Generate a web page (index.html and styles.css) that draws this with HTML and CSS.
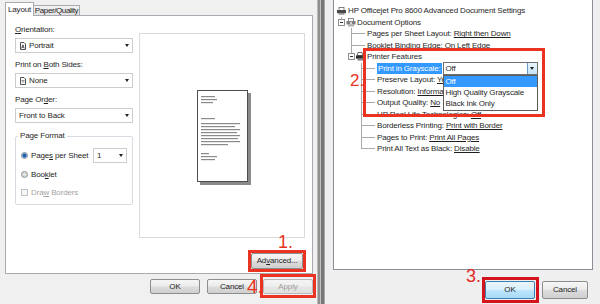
FILE: index.html
```html
<!DOCTYPE html>
<html>
<head>
<meta charset="utf-8">
<link rel="stylesheet" href="styles.css">
</head>
<body>
<div class="screen">
  <section class="dlg-left">
    <div class="tabs">
      <div class="tab active">Layout</div>
      <div class="tab paper">Paper/Quality</div>
    </div>
    <div class="panel">
      <div class="opts">
        <div class="lbl"><u>O</u>rientation:</div>
        <div class="combo">
          <svg class="cico" width="6" height="8" viewBox="0 0 6 8"><path d="M0.5 0.5h3.5l1.5 1.5v5.5h-5z" fill="#fff" stroke="#555" stroke-width="1"/><path d="M1.6 6.4l1.3-3.6 1.3 3.6M2.1 5.2h1.6" fill="none" stroke="#333" stroke-width="0.8"/></svg>
          <span>Portrait</span><span class="arr"></span>
        </div>
        <div class="lbl gap">Print on <u>B</u>oth Sides:</div>
        <div class="combo">
          <svg class="cico" width="6" height="8" viewBox="0 0 6 8"><path d="M0.5 0.5h3.5l1.5 1.5v5.5h-5z" fill="#fff" stroke="#555" stroke-width="1"/><path d="M1.5 3.5h3M1.5 5h3" stroke="#777" stroke-width="0.8"/></svg>
          <span>None</span><span class="arr"></span>
        </div>
        <div class="lbl gap">Page Or<u>d</u>er:</div>
        <div class="combo plain"><span>Front to Back</span><span class="arr"></span></div>
        <fieldset class="group">
          <legend>Page Format</legend>
          <div class="frow first"><span class="radio on"></span><span>Page<u>s</u> per Sheet</span><div class="combo small"><span>1</span><span class="arr"></span></div></div>
          <div class="frow"><span class="radio"></span><span>Boo<u>k</u>let</span></div>
          <div class="frow off"><span class="check"></span><span>Dra<u>w</u> Borders</span></div>
        </fieldset>
      </div>
      <div class="pcol">
        <div class="preview">
          <div class="page">
            <svg width="49" height="90" viewBox="0 0 49 90">
              <g fill="#8a8a8a">
                <rect x="3" y="5" width="14" height="1.2"/>
                <rect x="3" y="8" width="16" height="1.2"/>
                <rect x="3" y="11" width="12" height="1.2"/>
                <rect x="3" y="27" width="14" height="1.2"/>
                <rect x="3" y="32" width="39" height="1.2"/>
                <rect x="3" y="35" width="34" height="1.2"/>
                <rect x="3" y="38" width="39" height="1.2"/>
                <rect x="3" y="41" width="36" height="1.2"/>
                <rect x="3" y="44" width="39" height="1.2"/>
                <rect x="3" y="47" width="37" height="1.2"/>
                <rect x="3" y="50" width="39" height="1.2"/>
                <rect x="3" y="53" width="27" height="1.2"/>
                <rect x="3" y="62" width="8" height="1.2"/>
                <rect x="3" y="65" width="16" height="1.2"/>
                <rect x="3" y="68" width="14" height="1.2"/>
              </g>
            </svg>
          </div>
        </div>
        <div class="adv-row">
          <div class="mark adv">
            <button class="btn wide">Ad<u>v</u>anced...</button>
            <span class="num n1">1.</span>
          </div>
        </div>
      </div>
    </div>
    <div class="btnrow-left">
      <button class="btn">OK</button>
      <button class="btn cancel">Cancel</button>
      <div class="mark apply">
        <button class="btn dis">Apply</button>
        <span class="num n4">4.</span>
      </div>
    </div>
  </section>
  <div class="divider"></div>
  <section class="dlg-right">
    <div class="tree">
      <div class="row l0"><span class="ico"><svg width="9" height="8" viewBox="0 0 9 8"><rect x="2" y="0.5" width="5" height="3" fill="#fff" stroke="#666" stroke-width="0.8"/><rect x="0" y="3" width="9" height="3.2" fill="#4a4a4a"/><rect x="1.5" y="6" width="6" height="1.8" fill="#9a9a9a"/></svg></span><span class="t">HP Officejet Pro 8600 Advanced Document Settings</span></div>
      <div class="row l1"><span class="exp up"><i class="box"></i></span><span class="ico"><svg width="10" height="9" viewBox="0 0 10 9"><rect x="2.5" y="0.5" width="5" height="3" fill="#fff" stroke="#777" stroke-width="0.8"/><rect x="0.5" y="3" width="9" height="3.5" fill="#7d7d7d"/><circle cx="5" cy="5" r="1.2" fill="#d8d8d8"/><rect x="2" y="6.5" width="6" height="2" fill="#b0b0b0"/></svg></span><span class="t">Document Options</span></div>
      <div class="row l2"><span class="exp tee"></span><span class="ico stub"></span><span class="t">Pages per Sheet Layout: <u>Right then Down</u></span></div>
      <div class="row l2"><span class="exp tee"></span><span class="ico stub"></span><span class="t">Booklet Binding Edge: <u>On Left Edge</u></span></div>
      <div class="row l2"><span class="exp up"><i class="box"></i></span><span class="ico"><svg width="9" height="9" viewBox="0 0 9 9"><path d="M2 0.5l4 0 1 3h-6z" fill="#fff" stroke="#444" stroke-width="0.8"/><rect x="0" y="3.5" width="9" height="3.2" fill="#2e2e2e"/><rect x="1.5" y="6.5" width="6" height="2" fill="#808080"/><rect x="6.5" y="4.3" width="1.2" height="1" fill="#6cc04a"/></svg></span><span class="t">Printer Features</span></div>
      <div class="row l3"><span class="exp tee"></span><span class="ico stub"></span><span class="t sel">Print in Grayscale:</span>
        <span class="dd"><span class="ddv">Off</span><span class="ddb"><span class="arr"></span></span>
          <span class="pop">
            <span class="opt hi">Off</span>
            <span class="opt">High Quality Grayscale</span>
            <span class="opt">Black Ink Only</span>
          </span>
        </span>
      </div>
      <div class="row l3"><span class="exp tee"></span><span class="ico stub"></span><span class="t">Preserve Layout: <u>Ye</u></span></div>
      <div class="row l3"><span class="exp tee"></span><span class="ico stub"></span><span class="t">Resolution: <u>Informa</u></span></div>
      <div class="row l3"><span class="exp tee"></span><span class="ico stub"></span><span class="t">Output Quality: <u>No</u></span></div>
      <div class="row l3"><span class="exp tee"></span><span class="ico stub"></span><span class="t">HP Real Life Technologies: <u>Off</u></span></div>
      <div class="row l3"><span class="exp tee"></span><span class="ico stub"></span><span class="t">Borderless Printing: <u>Print with Border</u></span></div>
      <div class="row l3"><span class="exp tee"></span><span class="ico stub"></span><span class="t">Pages to Print: <u>Print All Pages</u></span></div>
      <div class="row l3"><span class="exp end"></span><span class="ico stub"></span><span class="t">Print All Text as Black: <u>Disable</u></span></div>
      <div class="redbox"><span class="num n2">2.</span></div>
    </div>
    <div class="btnrow-right">
      <div class="mark ok">
        <button class="btn blue">OK</button>
        <span class="num n3">3.</span>
      </div>
      <button class="btn cancel2">Cancel</button>
    </div>
  </section>
</div>
</body>
</html>
```

FILE: styles.css
```css
* { box-sizing: border-box; margin: 0; padding: 0; }
html, body { width: 600px; height: 304px; overflow: hidden; }
body {
  font-family: "Liberation Sans", Arial, sans-serif;
  font-size: 8px;
  letter-spacing: -0.15px;
  color: #1f1f1f;
  background: #f0f0f0;
}
.screen { display: flex; width: 600px; height: 304px; }

/* ---------- left dialog ---------- */
.dlg-left {
  width: 317px;
  flex: none;
  display: flex;
  flex-direction: column;
  background: #f0f0f0;
}
.tabs { display: flex; align-items: flex-end; height: 15px; padding-left: 5px; }
.tab {
  height: 10px;
  border: 1px solid #a7aab0;
  border-bottom: 0;
  background: linear-gradient(#f3f3f3, #e2e2e2);
  line-height: 9px;
  text-align: center;
  white-space: nowrap;
}
.tab.active {
  width: 29px;
  height: 14px;
  margin-bottom: -1px;
  background: #fff;
  line-height: 13px;
  z-index: 1;
}
.tab.paper { width: 47px; margin-left: -1px; letter-spacing: -0.4px; }

.panel {
  margin-left: 5px;
  width: 308px;
  height: 259px;
  border: 1px solid #a7aab0;
  background: #fff;
  display: grid;
  grid-template-columns: 118px 166px;
  column-gap: 6px;
  align-items: start;
  padding: 8px 0 0 9px;
}
.opts { display: flex; flex-direction: column; }
.lbl { line-height: 12px; height: 12px; white-space: nowrap; }
.lbl.gap { margin-top: 6px; }
.combo {
  height: 15px;
  margin-top: 2px;
  border: 1px solid #cdcdcd;
  background: #fff;
  display: flex;
  align-items: center;
  padding: 0 3px 0 4px;
  white-space: nowrap;
}
.combo.plain { padding-left: 3px; }
.cico { margin-right: 3px; flex: none; }
.arr {
  margin-left: auto;
  width: 0; height: 0;
  border-left: 2.5px solid transparent;
  border-right: 2.5px solid transparent;
  border-top: 3px solid #222;
}
.group {
  margin-top: 7px;
  border: 1px solid #d5dbe1;
  border-radius: 2px;
  padding: 0 5px 3.5px 5px;
  min-width: 0;
}
.group legend {
  margin-left: -3px;
  padding: 0 2px;
  line-height: 12px;
  height: 12px;
}
.frow { height: 15px; display: flex; align-items: center; margin-top: 3.5px; white-space: nowrap; }
.frow.first { margin-top: 6px; }
.frow.off { color: #a3a3a3; }
.radio {
  width: 7px; height: 7px;
  border-radius: 50%;
  border: 1px solid #8c8f94;
  background: radial-gradient(circle, #e8e8e8, #d0d0d0);
  margin-right: 3px;
  flex: none;
}
.radio.on { background: radial-gradient(circle, #1b5fb3 0 1.6px, #8ab4e0 2.2px, #e6eef7 3px); }
.check {
  width: 7px; height: 7px;
  border: 1px solid #c3c3c3;
  background: #f5f5f5;
  margin-right: 3px;
  flex: none;
}
.combo.small { width: 34px; margin: 0 0 0 auto; padding-left: 3px; }

.pcol { display: flex; flex-direction: column; }
.preview {
  margin-top: 9px;
  height: 205px;
  border: 1px solid #dadada;
  display: flex;
  align-items: center;
  justify-content: center;
}
.page {
  width: 51px; height: 92px;
  border: 1px solid #4e4e4e;
  background: #fff;
  box-shadow: 3px 3px 0 #8a8a8a;
}
.page svg { display: block; }
.adv-row { margin-top: 12px; margin-right: -1px; display: flex; justify-content: flex-end; }

.mark { border: 3px solid #ea3323; position: relative; display: flex; }
.btn {
  font-family: inherit;
  font-size: 8px;
  letter-spacing: inherit;
  color: #1f1f1f;
  width: 50px;
  height: 15px;
  border: 1px solid #8d8d8d;
  border-radius: 2px;
  background: linear-gradient(#f6f6f6, #ebebeb 48%, #dddddd 52%, #cfcfcf);
  padding: 0;
  line-height: 13px;
  text-align: center;
}
.btn.wide { width: 52px; height: 16px; line-height: 14px; }
.btn.dis { color: #9c9c9c; border-color: #b8b8b8; background: linear-gradient(#f4f4f4, #eeeeee 48%, #e6e6e6 52%, #e0e0e0); }
.num {
  position: absolute;
  color: #ea3323;
  letter-spacing: 0;
  line-height: 1;
  white-space: nowrap;
  font-family: "Liberation Sans", Arial, sans-serif;
}
.n1 { font-size: 18px; left: 27px; top: -20px; }
.n4 { font-size: 19px; left: -16px; top: 0px; }
.n2 { font-size: 17px; left: -16px; top: 21px; }
.n3 { font-size: 18px; left: -19px; top: -13px; color: #e52a26; }

.btnrow-left {
  height: 24px;
  display: flex;
  align-items: center;
  justify-content: flex-end;
  padding-right: 1px;
}
.btnrow-left .cancel { margin-left: 7px; margin-right: 3px; }
.mark.apply { padding: 2px 0 1px 0; }

/* ---------- divider ---------- */
.divider {
  width: 8px;
  flex: none;
  background: linear-gradient(to right, #b9b9b9 0 1px, #8f8f8f 1px 3px, #c3c3c3 3px 4px, #777 4px 7px, #a8a8a8 7px 8px);
}

/* ---------- right dialog ---------- */
.dlg-right {
  flex: 1;
  padding-left: 8px;
  display: flex;
  flex-direction: column;
  background: #efefef;
}
.tree {
  width: 260px;
  height: 270px;
  border: 1px solid #8a8e96;
  border-top: 0;
  background: #fff;
  position: relative;
  padding: 5px 0 0 3px;
}
.row { height: 11.5px; display: flex; align-items: center; white-space: nowrap; }
.row.l2 { padding-left: 10px; }
.row.l3 { padding-left: 20px; }
.exp, .ico { height: 100%; flex: none; display: flex; align-items: center; justify-content: center; }
.exp { width: 9px; }
.ico { width: 11px; justify-content: flex-start; }
.tee {
  background:
    linear-gradient(#a9a9a9, #a9a9a9) 4px 0 / 1px 100% no-repeat,
    linear-gradient(#a9a9a9, #a9a9a9) 4px 50% / 5px 1px no-repeat;
}
.end {
  background:
    linear-gradient(#a9a9a9, #a9a9a9) 4px 0 / 1px 50% no-repeat,
    linear-gradient(#a9a9a9, #a9a9a9) 4px 50% / 5px 1px no-repeat;
}
.up { background: linear-gradient(#a9a9a9, #a9a9a9) 4px 0 / 1px 50% no-repeat; }
.stub { background: linear-gradient(#a9a9a9, #a9a9a9) 0 50% / 9px 1px no-repeat; }
.box {
  width: 7px; height: 7px;
  border: 1px solid #8f8f8f;
  background: #fff linear-gradient(#333, #333) center / 3px 1px no-repeat;
}
.t { line-height: 11px; }
.sel { background: #3399ff; color: #fff; padding: 0 1px; }
.dd {
  position: relative;
  margin-left: 1px;
  width: 95px;
  height: 13px;
  border: 1px solid #6f6f6f;
  background: #fff;
  display: flex;
  align-items: center;
}
.ddv { padding-left: 2px; flex: 1; }
.ddb {
  width: 10px;
  height: 100%;
  border-left: 1px solid #6b9ccc;
  background: linear-gradient(#eaf5fd, #c6e3f8);
  display: flex;
  align-items: center;
  justify-content: center;
}
.ddb .arr { margin: 0; }
.pop {
  position: absolute;
  left: -1px;
  top: 12px;
  width: 95px;
  border: 1px solid #5e5e5e;
  background: #fff;
  display: flex;
  flex-direction: column;
  padding-bottom: 1px;
}
.opt { height: 11px; line-height: 11px; padding-left: 2px; }
.opt.hi { background: #3399ff; color: #fff; }
.redbox {
  position: absolute;
  left: 29px;
  top: 48px;
  width: 182px;
  height: 69px;
  border: 3px solid #ea3323;
}

.btnrow-right {
  margin-top: 7px;
  display: flex;
  align-items: flex-start;
  justify-content: flex-end;
  padding-right: 12px;
}
.mark.ok { border-color: #d4141c; padding: 1px 1px 1px 0; }
.btn.blue {
  height: 18px;
  line-height: 16px;
  border-color: #3c7fb1;
  background: linear-gradient(#eaf6fd, #d9f0fc 48%, #bee6fd 52%, #a7d9f5);
}
.btn.cancel2 { width: 46px; height: 18px; line-height: 16px; margin-left: 3px; margin-top: 4px; }
```
